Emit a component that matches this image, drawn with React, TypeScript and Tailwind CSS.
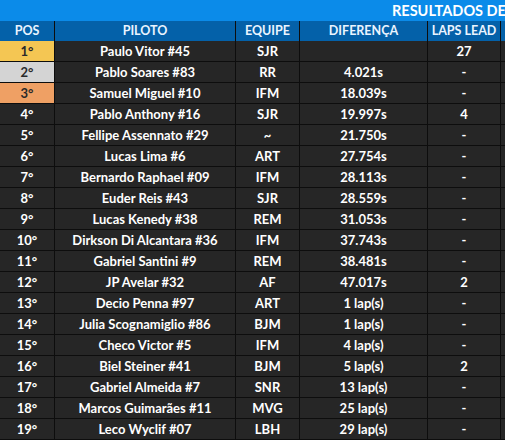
import React from 'react';

type Row = { pos: number; piloto: string; equipe: string; diff: string; laps: string };

const rows: Row[] = [
  { pos: 1, piloto: 'Paulo Vitor #45', equipe: 'SJR', diff: '', laps: '27' },
  { pos: 2, piloto: 'Pablo Soares #83', equipe: 'RR', diff: '4.021s', laps: '-' },
  { pos: 3, piloto: 'Samuel Miguel #10', equipe: 'IFM', diff: '18.039s', laps: '-' },
  { pos: 4, piloto: 'Pablo Anthony #16', equipe: 'SJR', diff: '19.997s', laps: '4' },
  { pos: 5, piloto: 'Fellipe Assennato #29', equipe: '~', diff: '21.750s', laps: '-' },
  { pos: 6, piloto: 'Lucas Lima #6', equipe: 'ART', diff: '27.754s', laps: '-' },
  { pos: 7, piloto: 'Bernardo Raphael #09', equipe: 'IFM', diff: '28.113s', laps: '-' },
  { pos: 8, piloto: 'Euder Reis #43', equipe: 'SJR', diff: '28.559s', laps: '-' },
  { pos: 9, piloto: 'Lucas Kenedy #38', equipe: 'REM', diff: '31.053s', laps: '-' },
  { pos: 10, piloto: 'Dirkson Di Alcantara #36', equipe: 'IFM', diff: '37.743s', laps: '-' },
  { pos: 11, piloto: 'Gabriel Santini #9', equipe: 'REM', diff: '38.481s', laps: '-' },
  { pos: 12, piloto: 'JP Avelar #32', equipe: 'AF', diff: '47.017s', laps: '2' },
  { pos: 13, piloto: 'Decio Penna #97', equipe: 'ART', diff: '1 lap(s)', laps: '-' },
  { pos: 14, piloto: 'Julia Scognamiglio #86', equipe: 'BJM', diff: '1 lap(s)', laps: '-' },
  { pos: 15, piloto: 'Checo Victor #5', equipe: 'IFM', diff: '4 lap(s)', laps: '-' },
  { pos: 16, piloto: 'Biel Steiner #41', equipe: 'BJM', diff: '5 lap(s)', laps: '2' },
  { pos: 17, piloto: 'Gabriel Almeida #7', equipe: 'SNR', diff: '13 lap(s)', laps: '-' },
  { pos: 18, piloto: 'Marcos Guimarães #11', equipe: 'MVG', diff: '25 lap(s)', laps: '-' },
  { pos: 19, piloto: 'Leco Wyclif #07', equipe: 'LBH', diff: '29 lap(s)', laps: '-' },
];

const grid = 'grid grid-cols-[54px_180px_63px_127px_72px_1fr] gap-x-px';

const posBg = (pos: number) => {
  if (pos === 1) return 'bg-[#f4c653] text-[#2a2a2a]';
  if (pos === 2) return 'bg-[#d4d4d4] text-[#2a2a2a]';
  if (pos === 3) return 'bg-[#efa064] text-[#2a2a2a]';
  return 'bg-[#262626] text-white';
};

export default function App() {
  return (
    <div className="w-[505px] h-[440px] overflow-hidden bg-[#0d0d0d] font-['Lato',sans-serif] font-bold">
      <div className="h-[21px] bg-[#0b8be9] text-white text-[14.5px] leading-[22px] pl-[392px] whitespace-nowrap">
        RESULTADOS DE
      </div>

      <div className={`${grid} h-[19px] text-[12.5px] leading-[20px] text-[#eaf4ff] text-center`}>
        <div className="bg-[#0461a9]">POS</div>
        <div className="bg-[#0461a9]">PILOTO</div>
        <div className="bg-[#0461a9]">EQUIPE</div>
        <div className="bg-[#0461a9]">DIFERENÇA</div>
        <div className="bg-[#0461a9]">LAPS LEAD</div>
        <div className="bg-[#0461a9]"></div>
      </div>

      <div className="flex flex-col gap-y-px pt-px">
        {rows.map((r) => (
          <div key={r.pos} className={`${grid} h-[20px] text-[13px] leading-[20px] text-center text-white`}>
            <div className={posBg(r.pos)}>{r.pos}°</div>
            <div className="bg-[#262626] whitespace-nowrap">{r.piloto}</div>
            <div className="bg-[#262626]">{r.equipe}</div>
            <div className="bg-[#262626]">{r.diff}</div>
            <div className="bg-[#262626]">{r.laps}</div>
            <div className="bg-[#262626]"></div>
          </div>
        ))}
      </div>
    </div>
  );
}
